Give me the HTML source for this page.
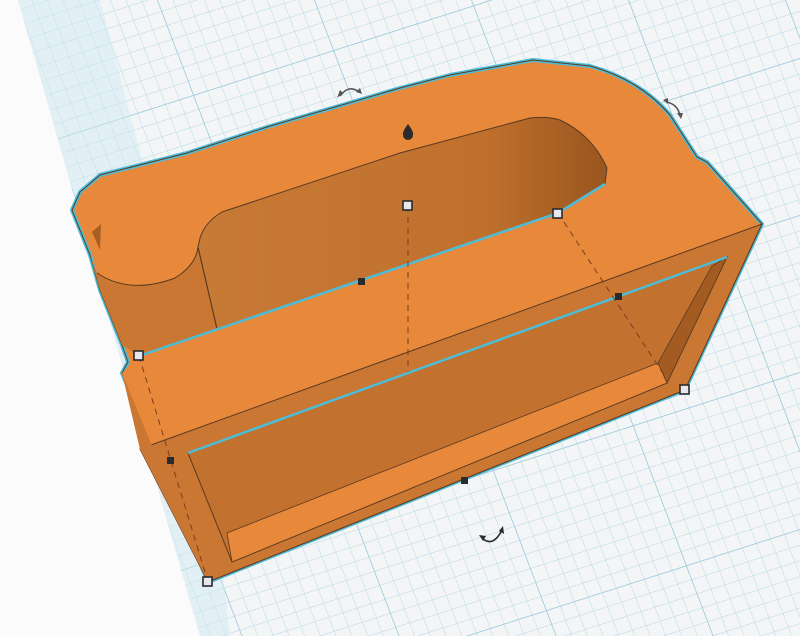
<!DOCTYPE html>
<html><head><meta charset="utf-8"><style>html,body{margin:0;padding:0;background:#fbfbfb;}svg{display:block}</style></head>
<body>
<svg width="800" height="636" viewBox="0 0 800 636" xmlns="http://www.w3.org/2000/svg">
<defs>
<pattern id="g" width="14" height="14" patternUnits="userSpaceOnUse" patternTransform="matrix(1,-0.32,0.38,1,0,0)">
<rect width="14" height="14" fill="#f3f5f6"/>
<path d="M0 0H14M0 0V14" stroke="#b4d9e6" stroke-width="0.9" fill="none"/>
</pattern>
<pattern id="G" width="140" height="140" patternUnits="userSpaceOnUse" patternTransform="matrix(1,-0.32,0.38,1,0,0)">
<path d="M0 0H140M0 0V140" stroke="#8fc3d6" stroke-width="1.2" fill="none"/>
</pattern>
<linearGradient id="cav" x1="0" y1="0" x2="1" y2="0">
<stop offset="0" stop-color="#c77a36"/><stop offset="0.7" stop-color="#c0702c"/><stop offset="1" stop-color="#99561f"/>
</linearGradient>
</defs>
<rect width="800" height="636" fill="#fbfbfb"/>
<polygon points="18,0 800,0 800,636 200,636" fill="url(#g)"/>
<polygon points="18,0 800,0 800,636 200,636" fill="url(#G)"/>
<polygon points="18,0 100,0 200,380 230,636 200,636" fill="#cfe8f2" opacity="0.45"/>

<!-- silhouette -->
<path d="M72,210 L80,192 L100,175 L187,153 L267,127 L400,88 L450,75 L533,60 L590,66 Q640,80 670,115 L697,157 L707,162 L762,224 L685,390 L208,582 L122,373 L128,362 L122,345 L100,290 L90,255 Z" fill="#e8883b" stroke="#4dbcd7" stroke-width="4" stroke-linejoin="round"/>
<path d="M72,210 L80,192 L100,175 L187,153 L267,127 L400,88 L450,75 L533,60 L590,66 Q640,80 670,115 L697,157 L707,162 L762,224 L685,390 L208,582 L122,373 L128,362 L122,345 L100,290 L90,255 Z" fill="none" stroke="#5a3a22" stroke-width="1"/>

<!-- bump wall -->
<path d="M90,255 L97,273 Q130,295 175,278 Q196,265 198,247 L217,329 L139,356 L122,345 L100,290 Z" fill="#c97733"/>
<path d="M97,273 Q130,295 175,278 Q196,265 198,247" fill="none" stroke="#5a3a22" stroke-width="1"/>
<path d="M92,232 L101,224 L100,250 Z" fill="#a85e22"/>

<!-- cavity -->
<path d="M198,247 L200,238 Q205,222 222,212 L400,153 L530,118 Q548,116 560,120 Q592,135 607,168 L605,184 L558,213 L217,329 Z" fill="url(#cav)" stroke="#5a3a22" stroke-width="1"/>
<line x1="198" y1="247" x2="217" y2="329" stroke="#5a3a22" stroke-width="1"/>

<!-- top band of box -->
<polygon points="122,373 139,356 558,213 605,184 762,224 140,449" fill="#e8883b"/>
<polyline points="139,356 558,213 605,184" fill="none" stroke="#4dbcd7" stroke-width="2.5"/>
<!-- front frame & left side -->
<polygon points="140,449 762,224 685,390 208,582" fill="#c97733" stroke="#5a3a22" stroke-width="1"/>
<polygon points="122,373 140,449 208,582" fill="#c97733"/>
<!-- opening -->
<polygon points="188,453 727,257 667,383 232,562" fill="#c2712f" stroke="#5a3a22" stroke-width="1"/>
<polygon points="727,257 712,266 658,363 667,383" fill="#a35b22" stroke="#5a3a22" stroke-width="0.8"/>
<polygon points="227,533 658,363 667,383 232,562" fill="#e8883b" stroke="#5a3a22" stroke-width="0.8"/>
<line x1="188" y1="453" x2="727" y2="257" stroke="#4dbcd7" stroke-width="2.5"/>

<!-- dashed -->
<g stroke="#7a3d1a" stroke-width="1" stroke-dasharray="6,5" fill="none">
<line x1="408" y1="206" x2="408" y2="372"/>
<line x1="139" y1="356" x2="208" y2="582"/>
<line x1="558" y1="213" x2="666" y2="378"/>
</g>
<!-- handles -->
<g fill="#e6e8ee" stroke="#2a2a2a" stroke-width="1.6">
<rect x="134" y="351" width="9" height="9"/>
<rect x="403" y="201" width="9" height="9"/>
<rect x="553" y="209" width="9" height="9"/>
<rect x="680" y="385" width="9" height="9"/>
<rect x="203" y="577" width="9" height="9"/>
</g>
<g fill="#2b2b2b">
<rect x="358" y="278" width="7" height="7"/>
<rect x="615" y="293" width="7" height="7"/>
<rect x="167" y="457" width="7" height="7"/>
<rect x="461" y="477" width="7" height="7"/>
<path d="M408,124 Q414,132 413,135 A5,5 0 1 1 403,135 Q402,132 408,124Z"/>
</g>
<!-- rotate arrows -->
<g fill="none" stroke="#555" stroke-width="1.6">
<path d="M340,96 Q349,84 359,92"/>
<path d="M666,102 Q678,104 680,116"/>
<path d="M482,538 Q493,548 502,530" stroke="#2b2b2b"/>
</g>
<g fill="#555">
<path d="M337,98 L343,93 L340,90Z"/><path d="M362,94 L356,92 L360,88Z"/>
<path d="M663,100 L668,98 L668,104Z"/><path d="M681,119 L677,113 L683,113Z"/>
<path fill="#2b2b2b" d="M479,535 L486,536 L483,541Z"/><path fill="#2b2b2b" d="M503,526 L504,534 L499,531Z"/>
</g>
</svg>
</body></html>
